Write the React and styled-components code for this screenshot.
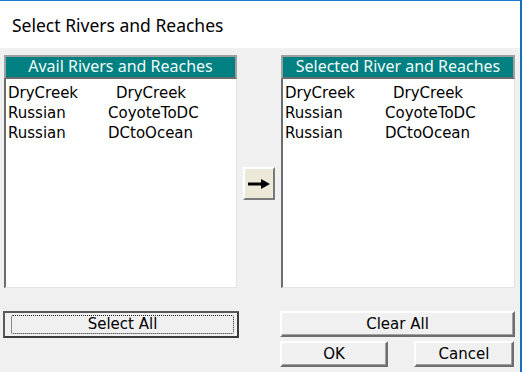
import React from 'react'
import styled, { createGlobalStyle } from 'styled-components'

const GlobalStyle = createGlobalStyle`
  html, body {
    margin: 0;
    padding: 0;
    background: #ffffff;
  }
`

const rivers = [
  { river: 'DryCreek', reach: 'DryCreek', indent: 8 },
  { river: 'Russian', reach: 'CoyoteToDC', indent: 0 },
  { river: 'Russian', reach: 'DCtoOcean', indent: 0 },
]

const ArrowIcon = () => (
  <svg width="22" height="10" viewBox="0 0 22 10">
    <rect x="0" y="3.5" width="15" height="3" fill="#000" />
    <path d="M13 0 L22 5 L13 10 Z" fill="#000" />
  </svg>
)

const ListPanel = ({ title, items }) => (
  <Panel>
    <PanelHeader>{title}</PanelHeader>
    <ListBox>
      {items.map((it, i) => (
        <ListRow key={i}>
          <span>{it.river}</span>
          <Reach indent={it.indent}>{it.reach}</Reach>
        </ListRow>
      ))}
    </ListBox>
  </Panel>
)

const App = () => {
  return (
    <>
      <GlobalStyle />
      <Window>
        <TitleBar>Select Rivers and Reaches</TitleBar>
        <Body>
          <ListPanel title="Avail Rivers and Reaches" items={rivers} />
          <Middle>
            <ArrowButton>
              <ArrowIcon />
            </ArrowButton>
          </Middle>
          <ListPanel title="Selected River and Reaches" items={rivers} />
          <LeftButtons>
            <DefaultButton>
              <FocusRect>Select All</FocusRect>
            </DefaultButton>
          </LeftButtons>
          <span />
          <RightButtons>
            <Button>Clear All</Button>
            <ButtonRow>
              <Button width={108}>OK</Button>
              <Button width={100}>Cancel</Button>
            </ButtonRow>
          </RightButtons>
        </Body>
      </Window>
    </>
  )
}

export default App

const Window = styled.div`
  width: 520px;
  height: 371px;
  border-top: 1px solid #1a7ad4;
  border-right: 2px solid #1a6fc0;
  display: flex;
  flex-direction: column;
  background: #f0f0f0;
  font-family: "DejaVu Sans", sans-serif;
  overflow: hidden;
`

const TitleBar = styled.div`
  height: 47px;
  flex: none;
  background: #ffffff;
  padding: 2px 0 0 12px;
  box-sizing: border-box;
  font-family: "Noto Sans", "Open Sans", sans-serif;
  font-size: 17.5px;
  line-height: 45px;
  color: #000;
`

const Body = styled.div`
  display: grid;
  grid-template-columns: 233px 44px 234px;
  grid-template-rows: 233px auto;
  row-gap: 23px;
  padding: 7px 0 0 4px;
`

const Panel = styled.div`
  display: flex;
  flex-direction: column;
`

const PanelHeader = styled.div`
  height: 24px;
  box-sizing: border-box;
  border: 2px solid #a0a0a0;
  border-bottom-color: #6d6d6d;
  background: #008080;
  color: #f2fbfb;
  font-family: "Noto Sans", "Open Sans", sans-serif;
  font-size: 16px;
  line-height: 19px;
  text-align: center;
  white-space: nowrap;
`

const ListBox = styled.div`
  flex: 1;
  background: #ffffff;
  border-left: 2px solid #6d6d6d;
  border-right: 1px solid #e3e3e3;
  border-bottom: 1px solid #e3e3e3;
  padding: 4px 0 0 2px;
`

const ListRow = styled.div`
  display: grid;
  grid-template-columns: 100px auto;
  height: 20px;
  font-size: 15px;
  line-height: 20px;
  color: #000;
  white-space: nowrap;
`

const Reach = styled.span`
  padding-left: ${p => p.indent}px;
`

const Middle = styled.div`
  display: flex;
  justify-content: center;
  align-items: flex-start;
  padding-top: 112px;
`

const ArrowButton = styled.button`
  width: 32px;
  height: 33px;
  padding: 0;
  box-sizing: border-box;
  background: #ece9d8;
  border: 2px solid;
  border-color: #ffffff #7a7a7a #7a7a7a #ffffff;
  display: flex;
  align-items: center;
  justify-content: center;
`

const LeftButtons = styled.div`
  margin-left: -1px;
`

const RightButtons = styled.div`
  display: flex;
  flex-direction: column;
  gap: 4px;
  margin-left: -1px;
`

const ButtonRow = styled.div`
  display: flex;
  justify-content: space-between;
  padding-right: 1px;
`

const Button = styled.button`
  width: ${p => (p.width ? `${p.width}px` : '235px')};
  height: 26px;
  padding: 0;
  box-sizing: border-box;
  background: #f0f0f0;
  border: 2px solid;
  border-color: #ffffff #6d6d6d #6d6d6d #ffffff;
  box-shadow: inset -1px -1px 0 #a0a0a0;
  font-family: "DejaVu Sans", sans-serif;
  font-size: 15px;
  color: #000;
`

const DefaultButton = styled.button`
  width: 236px;
  height: 27px;
  padding: 2px;
  box-sizing: border-box;
  background: #f0f0f0;
  border: 2px solid #5a5a5a;
  border-right-color: #3c3c3c;
  border-bottom-color: #3c3c3c;
  font-family: "DejaVu Sans", sans-serif;
  font-size: 15px;
  color: #000;
  display: flex;
`

const FocusRect = styled.span`
  flex: 1;
  border: 1px dotted #202020;
  border-radius: 2px;
  line-height: 17px;
  text-align: center;
  margin-left: 4px;
  margin-right: 1px;
`
